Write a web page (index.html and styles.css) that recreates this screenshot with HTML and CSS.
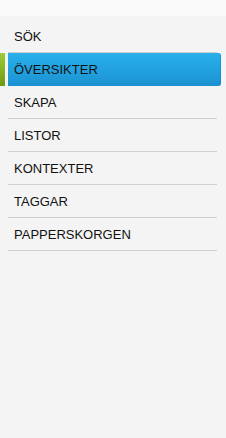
FILE: index.html
```html
<!DOCTYPE html>
<html lang="sv">
<head>
<meta charset="utf-8">
<title>Meny</title>
<link rel="stylesheet" href="styles.css">
</head>
<body>
<div class="topbar"></div>
<nav class="menu">
  <ul class="menu-list">
    <li class="menu-item">SÖK</li>
    <li class="menu-item menu-item--active">ÖVERSIKTER</li>
    <li class="menu-item">SKAPA</li>
    <li class="menu-item">LISTOR</li>
    <li class="menu-item">KONTEXTER</li>
    <li class="menu-item">TAGGAR</li>
    <li class="menu-item">PAPPERSKORGEN</li>
  </ul>
</nav>
</body>
</html>
```
FILE: styles.css
```css
html, body {
  margin: 0;
  padding: 0;
  background: #f4f4f4;
  font-family: "Liberation Sans", Arial, sans-serif;
  font-size: 13px;
  color: #111;
}

.topbar {
  height: 16px;
  background: #f9f9f9;
}

.menu {
  padding: 4px 9px 0 8px;
}

.menu-list {
  list-style: none;
  margin: 0;
  padding: 0;
  display: flex;
  flex-direction: column;
}

.menu-item {
  height: 32px;
  line-height: 33px;
  padding-left: 6px;
  border-bottom: 1px solid #cfcfcf;
  white-space: nowrap;
}

.menu-item--active {
  position: relative;
  height: 33px;
  line-height: 33px;
  margin-right: -4px;
  border-bottom: none;
  border-radius: 0 3px 3px 0;
  background: linear-gradient(to bottom, #29afe9 0%, #22a2e0 50%, #1b91d0 100%);
  box-shadow: inset -1px 0 0 rgba(20, 110, 170, 0.35);
}

.menu-item--active::before {
  content: "";
  position: absolute;
  left: -8px;
  top: 0;
  width: 5px;
  height: 33px;
  background: linear-gradient(to bottom, #9fcb3c 0%, #86b326 50%, #6d9a10 100%);
}
```
